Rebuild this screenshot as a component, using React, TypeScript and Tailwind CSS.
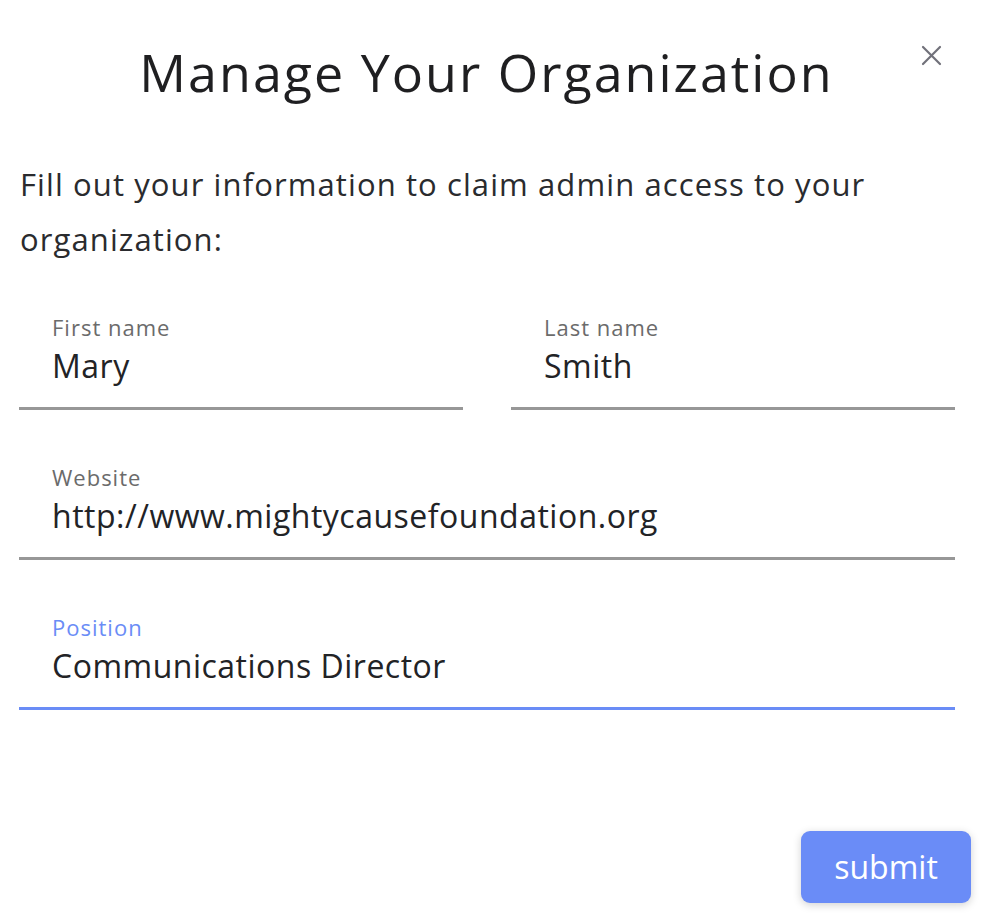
import React, { useState } from 'react';

const Field = ({ label, value, active = false, className = '' }: { label: string; value: string; active?: boolean; className?: string }) => (
  <div className={`flex flex-col border-b-[3px] pl-[33px] pb-[19px] ${active ? 'border-[#6a8cf6]' : 'border-[#979797]'} ${className}`}>
    <label className={`text-[22px] leading-[34px] tracking-[1px] ${active ? 'text-[#6a8cf6]' : 'text-[#6b6b6b]'}`}>{label}</label>
    <div className="text-[32px] leading-[44px] tracking-[0.5px] text-[#222326]">{value}</div>
  </div>
);

const App = () => {
  const [open] = useState(true);

  return (
    <div className="w-[982px] h-[916px] bg-white relative font-['Open_Sans',sans-serif]">
      {open && (
        <>
          <button className="absolute top-[45px] right-[40px] text-[#71717a]">
            <svg width="21" height="21" viewBox="0 0 21 21" fill="none" stroke="currentColor" strokeWidth="2.2" strokeLinecap="round">
              <path d="M2 2 L19 19 M19 2 L2 19" />
            </svg>
          </button>

          <div className="pt-[39px] pr-[9px] text-center">
            <h1 className="text-[52px] leading-[66px] text-[#1f1f21] tracking-[2px]">Manage Your Organization</h1>
          </div>

          <p className="mt-[52px] px-[20px] text-[31px] leading-[55px] tracking-[1.1px] text-[#2a2b2e]">
            Fill out your information to claim admin access to your organization:
          </p>

          <div className="mt-[43px] pl-[19px] pr-[27px] flex flex-col gap-[50px]">
            <div className="grid grid-cols-2 gap-[48px]">
              <Field label="First name" value="Mary" />
              <Field label="Last name" value="Smith" />
            </div>
            <Field label="Website" value="http://www.mightycausefoundation.org" />
            <Field label="Position" value="Communications Director" active />
          </div>

          <div className="mt-[121px] flex justify-end pr-[11px]">
            <button className="w-[170px] h-[72px] rounded-[9px] bg-[#6a8cf7] text-white text-[32px] shadow-[0_2px_8px_rgba(0,0,0,0.18)]">
              submit
            </button>
          </div>
        </>
      )}
    </div>
  );
};

export default App;
